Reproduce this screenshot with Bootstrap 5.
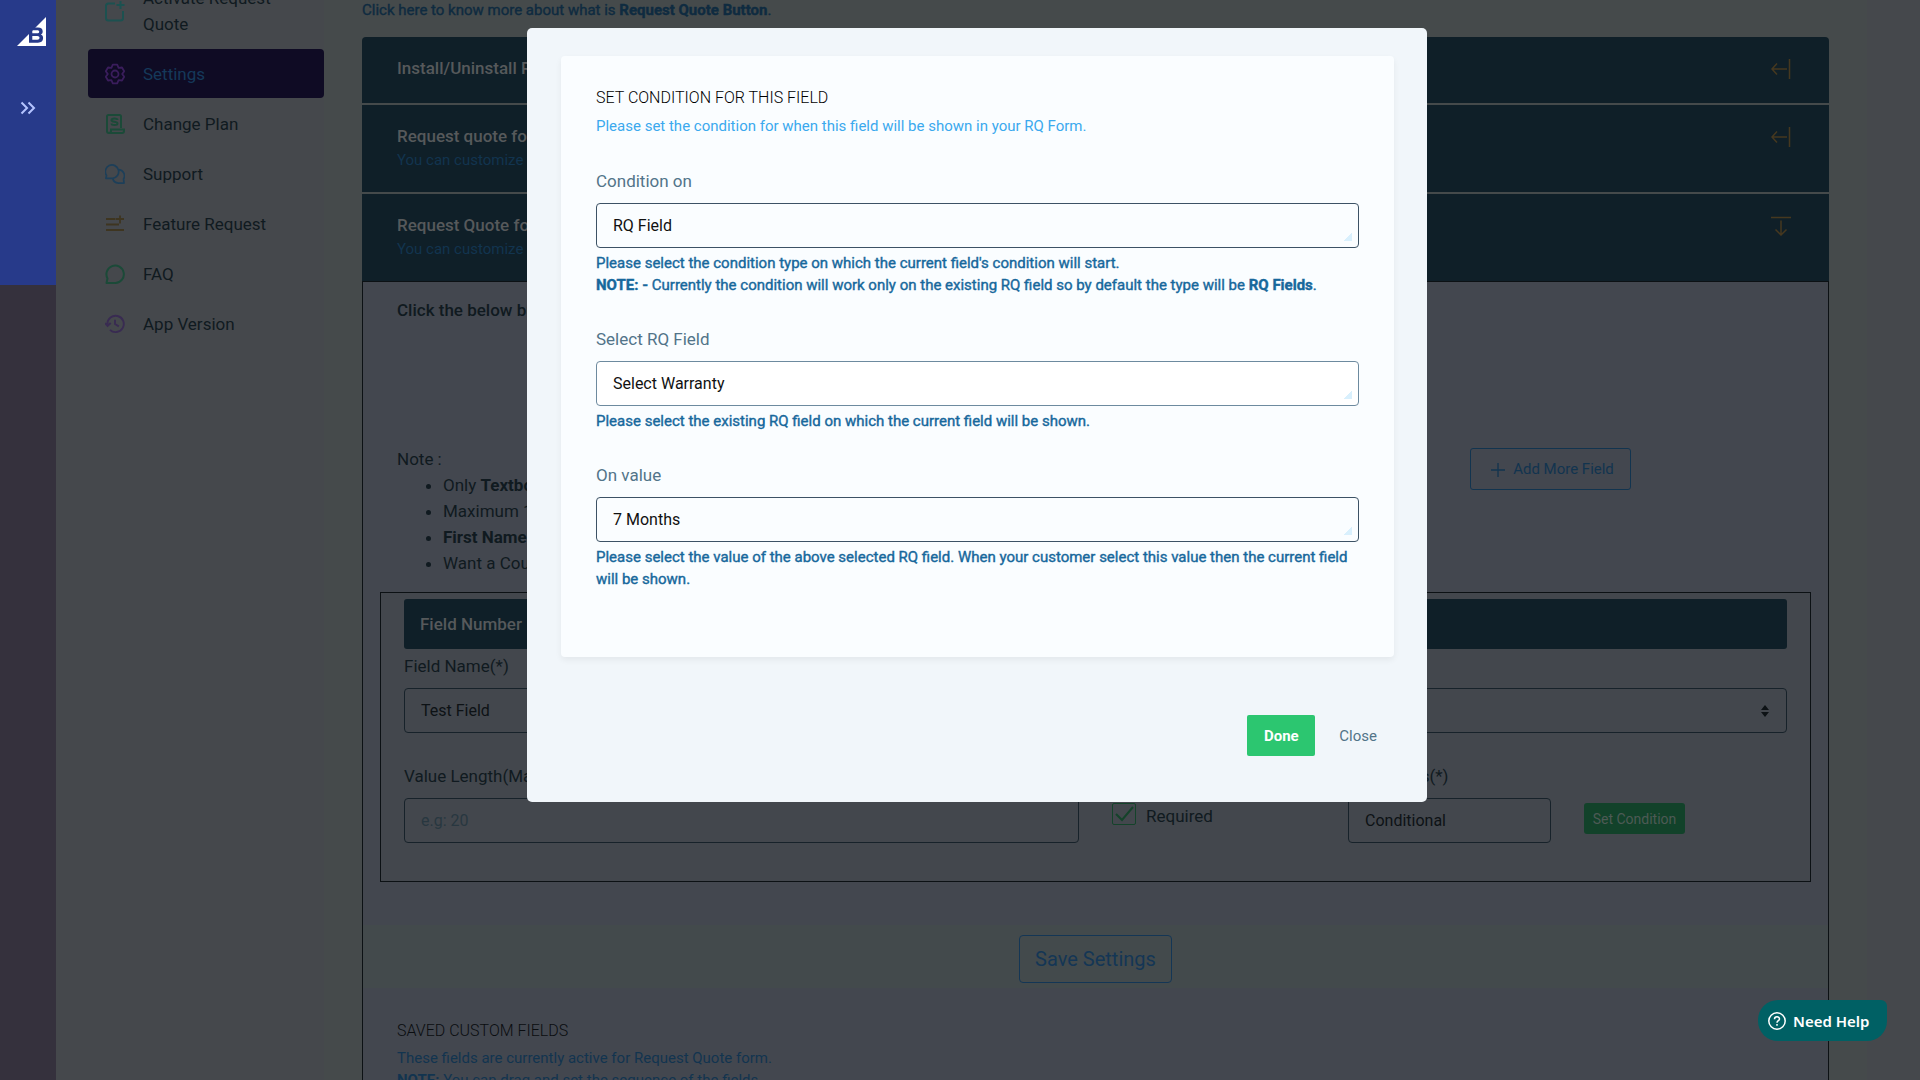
<!DOCTYPE html>
<html lang="en">
<head>
<meta charset="utf-8">
<meta name="viewport" content="width=device-width, initial-scale=1">
<title>Request Quote Settings</title>
<link rel="stylesheet" href="https://cdn.jsdelivr.net/npm/bootstrap@5.3.0/dist/css/bootstrap.min.css">
<style>
  :root { --navy: #0f1f28; --ink: #101a20; --line: #17222a; --sky: #12344f; }
  body { font-family: Roboto, "Liberation Sans", sans-serif; font-size: 17px; line-height: 26px; color: var(--ink); background: #45484c; height: 100vh; overflow: hidden; }
  .page-shell { min-height: 100vh; padding-right: 53px; }
  .rail { width: 56px; background: #35313d; }
  .rail-top { height: 285px; background: #273a8a; padding-top: 17px; }
  .rail-top .logo { display: block; margin-left: 17px; }
  .rail-top button { display: block; margin-top: 47px; width: 56px; padding: 0; border: 0; background: none; }
  .side { width: 268px; padding-left: 32px; margin-top: -25px; }
  .side a { display: flex; align-items: center; gap: 18px; padding: 12px 16px 11px 17px; border-radius: 4px; color: var(--ink); text-decoration: none; min-height: 49px; margin-bottom: 1px; }
  .side a svg { flex: none; }
  .side a.current { background: #0f0b24; color: #15395a; }
  .side .tall { padding-top: 10px; min-height: 73px; }
  .content-area { background: #454a4b; padding: 0 38px; min-width: 0; height: 100vh; overflow: hidden; }
  .hint { font-size: 15px; line-height: 22px; -webkit-text-stroke: 0.4px currentColor; color: #0f2b40; }
  .intro { line-height: 20px; margin-bottom: 17px; }
  .fold { background: var(--navy); color: #56595b; font-weight: 500; padding: 18px 38px 20px 35px; margin-bottom: 2px; min-height: 66px; display: flex; justify-content: space-between; align-items: flex-start; }
  .fold.two { min-height: 87px; }
  .fold:first-of-type { border-radius: 4px 4px 0 0; }
  .fold .sub { font-size: 15px; line-height: 22px; font-weight: 400; color: var(--sky); }
  .fold button { border: 0; padding: 4px 0 0; background: none; line-height: 0; }
  .fold-body { border: 1px solid #0c1114; background: #43474f; min-height: 900px; margin-top: -2px; padding-top: 15px; }
  .indent { padding: 0 34px; }
  .lead-line { font-weight: 500; }
  .note-row { margin-top: 123px; height: 146px; }
  .note-row ul { padding-left: 46px; margin: 0; }
  .add-btn { margin: 2px 163px 0 0; width: 161px; height: 42px; border: 1px solid var(--sky); color: var(--sky); background: none; border-radius: 3px; font-size: 15px; padding: 0 0 0 4px; }
  .field-panel { border: 1px solid #0c1114; margin: 0 17px 0 17px; padding: 6px 23px 38px; background: #43474d; }
  .field-panel .row { --bs-gutter-x: 33px; }
  .second-row { margin-top: 30px; }
  .req-label { margin-left: 10px; }
  .field-title { background: var(--navy); color: #56595b; font-weight: 500; border-radius: 3px; padding: 12px 16px; height: 50px; margin-bottom: 4px; }
  .field-panel label.cap { display: block; margin-bottom: 9px; }
  .box { display: block; width: 100%; height: 45px; padding: 0 16px; border: 1px solid var(--line); border-radius: 4px; background: none; color: #0d1215; font-size: 16px; appearance: none; outline: 0; }
  .box::placeholder { color: #283740; opacity: 1; }
  .updown { background: url("data:image/svg+xml,%3Csvg xmlns='http://www.w3.org/2000/svg' viewBox='0 0 8 12'%3E%3Cpath fill='%230d1215' d='M4 0 0 5h8zM4 12 0 7h8z'/%3E%3C/svg%3E") no-repeat right 17px center / 8px 12px; }
  .tick { appearance: none; width: 24px; height: 22px; margin: 0; border: 1px solid #14432a; border-radius: 2px; background: url("data:image/svg+xml,%3Csvg xmlns='http://www.w3.org/2000/svg' viewBox='0 0 22 20'%3E%3Cpath fill='none' stroke='%2314432a' stroke-width='2' d='M3 10l6 6L20 3'/%3E%3C/svg%3E") center / 22px 20px no-repeat; }
  .set-btn { height: 31px; width: 101px; padding: 0; border: 0; border-radius: 3px; background: #12422a; color: #4d5a55; font-size: 14px; }
  .save-band { background: #434a4c; margin-top: 43px; padding: 10px 0 5px; text-align: center; }
  .save-btn { width: 153px; height: 48px; border: 1px solid #143655; border-radius: 4px; background: none; color: #143655; font-size: 20px; }
  .saved { padding-top: 30px; }
  .saved h2, .cond-card h2 { font-size: 16px; line-height: 26px; font-weight: 300; margin: 0; color: #0a0d10; }
  .saved p { font-size: 15px; line-height: 22px; margin: 3px 0 0; color: #12344f; }
  .cond-modal { padding-left: 34px; overflow: hidden; }
  .cond-modal .modal-dialog { max-width: 900px; margin-top: 28px; }
  .cond-modal .modal-content { border: 0; border-radius: 5px; background: #f1f6fa; padding: 28px 33px 46px 34px; }
  .cond-card { background: #fafdff; border-radius: 4px; box-shadow: 0 3px 6px rgba(0,0,0,.06); padding: 29px 35px 67px; }
  .cond-card h2 { color: #000; }
  .cond-card .about { font-size: 15px; line-height: 22px; color: #3ba9ee; margin: 4px 0 31px; }
  .cond-card label { color: #527489; display: block; margin-bottom: 9px; }
  .cond-card .box { border-color: #3c5265; color: #111; background: linear-gradient(135deg, transparent 50%, #d9f0fd 50%) no-repeat right 6px bottom 6px / 8px 8px; }
  .cond-card .box.light { border-color: #6d8a9f; background-color: #fff; }
  .cond-card .hint { color: #17689c; margin: 4px 0 30px; }
  .cond-foot { margin-top: 58px; padding-right: 1px; }
  .cond-foot button { border: 0; height: 41px; font-size: 15px; padding: 0 16px; border-radius: 2px; }
  .cond-foot .done-btn { background: #2cc670; color: #fff; font-weight: 700; width: 68px; }
  .cond-foot .close-btn { background: none; color: #527489; margin-left: 8px; }
  .help-btn { position: fixed; right: 33px; bottom: 39px; z-index: 1060; height: 41px; width: 129px; border: 0; border-radius: 20px 6px 20px 20px; background: #006064; color: #fff; font: 600 15px/20px "Noto Sans", "Open Sans", sans-serif; padding: 0 0 0 10px; display: flex; align-items: center; gap: 7px; }
</style>
<script src="https://cdn.jsdelivr.net/npm/bootstrap@5.3.0/dist/js/bootstrap.bundle.min.js"></script>
</head>
<body>
<div class="page-shell d-flex">
  <div class="rail flex-shrink-0">
    <div class="rail-top">
      <svg class="logo" width="29" height="29" viewBox="0 0 29 29" role="img" aria-label="Logo"><path fill="#fff" d="M29 0v29H0L29 0z"/><path fill="#273a8a" fill-rule="evenodd" d="M12 15.500L17 10.500h4c3.200 0 4.700 1.500 4.700 3.900 0 1.500-.7 2.500-1.900 3.100 1.500.6 2.300 1.800 2.300 3.600 0 3-1.700 4.600-5.200 4.600H12zM15.300 13.200v3h4.900c1.200 0 2-.5 2-1.500s-.8-1.500-2-1.500zM15.300 19v3.700h5c1.400 0 2.200-.7 2.200-1.900 0-1.100-.8-1.800-2.200-1.800z"/></svg>
      <button type="button" aria-label="Expand"><svg width="48" height="24" viewBox="0 0 48 24" fill="none" stroke="#b5c4ff" stroke-width="2"><path d="M17.500 6.500l5.500 5.500-5.500 5.500M24.500 6.500l5.500 5.500-5.500 5.500"/></svg></button>
    </div>
  </div>
  <nav class="side flex-shrink-0">
    <a href="#" class="tall"><svg width="20" height="22" viewBox="0 0 20 22" fill="none" stroke="#1c5150" stroke-width="2"><path d="M10 3.500H3.500A2.500 2.500 0 0 0 1 6v12a2.500 2.500 0 0 0 2.500 2.500h12A2.500 2.500 0 0 0 18 18v-7M15.500 1v8M11.500 5h8"/></svg><span>Activate Request Quote</span></a>
    <a href="#" class="current"><svg width="20" height="22" viewBox="0 0 20 22" fill="none" stroke="#3a1d5c" stroke-width="1.800" stroke-linejoin="round"><path d="M7.800 1.600h4.400l1.400 3.200 3.400-.3 2.200 3.700-2 2.800 2 2.800-2.200 3.700-3.400-.3-1.400 3.200H7.800l-1.400-3.200-3.400.3L.8 13.800l2-2.800-2-2.800L3 4.500l3.400.3z"/><circle cx="10" cy="11" r="3.500"/></svg>Settings</a>
    <a href="#"><svg width="20" height="22" viewBox="0 0 20 22" fill="none" stroke="#1b4a38" stroke-width="2"><path d="M16 15V3.500A1.500 1.500 0 0 0 14.500 2h-11A1.500 1.500 0 0 0 2 3.500V18a2 2 0 0 0 2 2h13a2 2 0 0 0 2-2v-1.500H6V18a2 2 0 0 1-2 2M12.500 7c0-2-6-2-6 .3 0 2.200 6 .8 6 3.200 0 2-6 2-6 0"/></svg>Change Plan</a>
    <a href="#"><svg width="20" height="22" viewBox="0 0 21 22" fill="none" stroke="#1d3f59" stroke-width="1.800" stroke-linejoin="round"><path d="M1 15.500l.6-3A7 7 0 1 1 8 15.500zM14.800 6.500a6.500 6.500 0 0 1 4.700 9.800l.5 4.200h-6a6.500 6.500 0 0 1-6-5"/></svg>Support</a>
    <a href="#"><svg width="20" height="22" viewBox="0 0 20 22" fill="none" stroke="#3e3520" stroke-width="1.800"><path d="M1 6h9.500M1 11.500h13M1 17h18M15 2.500v8M11 6h8"/></svg>Feature Request</a>
    <a href="#"><svg width="20" height="22" viewBox="0 0 20 22" fill="none" stroke="#1b4a38" stroke-width="2" stroke-linejoin="round"><path d="M1.500 20l1-4.500A8.700 8.700 0 1 1 10.500 20z"/></svg>FAQ</a>
    <a href="#"><svg width="20" height="22" viewBox="0 0 21 22" fill="none" stroke="#392b52" stroke-width="2"><path d="M2.500 11a8.600 8.600 0 1 1 2.700 6.200M0 10l2.700 3L6 10M10.500 6.500V11l4 2.500"/></svg>App Version</a>
  </nav>
  <main class="content-area flex-grow-1">
    <div class="hint intro">Click here to know more about what is <b>Request Quote Button</b>.</div>
    <section class="fold"><div>Install/Uninstall Request Quote</div><button type="button" aria-label="Open"><svg width="20" height="20" viewBox="0 0 20 20" fill="none" stroke="#46381f" stroke-width="1.500"><path d="M18.500 0v20M16 10H1M6 4.500L1 10l5 5.500"/></svg></button></section>
    <section class="fold two"><div>Request quote form<div class="sub">You can customize your form</div></div><button type="button" aria-label="Open"><svg width="20" height="20" viewBox="0 0 20 20" fill="none" stroke="#46381f" stroke-width="1.500"><path d="M18.500 0v20M16 10H1M6 4.500L1 10l5 5.500"/></svg></button></section>
    <section class="fold two"><div>Request Quote form<div class="sub">You can customize your form</div></div><button type="button" aria-label="Close section"><svg width="20" height="20" viewBox="0 0 20 20" fill="none" stroke="#46381f" stroke-width="1.500"><path d="M0 1.500h20M10 4.500v14M4.500 13.500l5.500 5.500 5.500-5.500"/></svg></button></section>
    <div class="fold-body">
      <div class="indent lead-line">Click the below button</div>
      <div class="indent note-row d-flex justify-content-between align-items-start">
        <div>Note :
          <ul><li>Only <b>Textbox</b></li><li>Maximum 10</li><li><b>First Name</b></li><li>Want a Country</li></ul>
        </div>
        <button type="button" class="add-btn"><svg width="14" height="14" viewBox="0 0 14 14" stroke="currentColor" stroke-width="1.300" class="me-2"><path d="M7 0v14M0 7h14"/></svg>Add More Field</button>
      </div>
      <form class="field-panel">
        <div class="field-title">Field Number 1</div>
        <div class="row">
          <div class="col-6"><label class="cap" for="fname">Field Name(*)</label><input class="box" id="fname" value="Test Field"></div>
          <div class="col-6"><label class="cap" for="ftype">Field Type(*)</label><select class="box updown" id="ftype"><option>Textbox</option></select></div>
        </div>
        <div class="row second-row">
          <div class="col-6"><label class="cap" for="flen">Value Length(Max)</label><input class="box" id="flen" placeholder="e.g: 20"></div>
          <div class="col-6"><div class="row">
            <div class="col-4 d-flex pt-4 mt-3"><input class="tick" type="checkbox" id="req" checked><label for="req" class="req-label">Required</label></div>
            <div class="col-4"><label class="cap" for="cond">Conditions(*)</label><select class="box" id="cond"><option>Conditional</option></select></div>
            <div class="col-4 pt-4 mt-3"><button type="button" class="set-btn">Set Condition</button></div>
          </div></div>
        </div>
      </form>
      <div class="save-band"><button type="button" class="save-btn">Save Settings</button></div>
      <div class="indent saved"><h2>SAVED CUSTOM FIELDS</h2><p>These fields are currently active for Request Quote form.<br><b>NOTE:</b> You can drag and set the sequence of the fields.</p></div>
    </div>
  </main>
</div>

<div class="modal show d-block cond-modal" tabindex="-1" role="dialog" aria-labelledby="condTitle">
  <div class="modal-dialog">
    <div class="modal-content">
      <div class="cond-card">
        <h2 id="condTitle">SET CONDITION FOR THIS FIELD</h2>
        <p class="about">Please set the condition for when this field will be shown in your RQ Form.</p>
        <label for="c1">Condition on</label>
        <select class="box" id="c1"><option>RQ Field</option></select>
        <p class="hint">Please select the condition type on which the current field's condition will start.<br><b>NOTE: -</b> Currently the condition will work only on the existing RQ field so by default the type will be <b>RQ Fields</b>.</p>
        <label for="c2">Select RQ Field</label>
        <select class="box light" id="c2"><option>Select Warranty</option></select>
        <p class="hint">Please select the existing RQ field on which the current field will be shown.</p>
        <label for="c3">On value</label>
        <select class="box" id="c3"><option>7 Months</option></select>
        <p class="hint mb-0">Please select the value of the above selected RQ field. When your customer select this value then the current field will be shown.</p>
      </div>
      <div class="cond-foot d-flex justify-content-end">
        <button type="button" class="done-btn">Done</button>
        <button type="button" class="close-btn">Close</button>
      </div>
    </div>
  </div>
</div>
<button type="button" class="help-btn"><svg width="18" height="18" viewBox="0 0 18 18" fill="none" stroke="#fff" stroke-width="1.500"><circle cx="9" cy="9" r="8.200"/><path d="M6.500 7.200c0-3.200 5-3.100 5-.3 0 1.900-2.500 1.700-2.500 3.800M9 12v1.700"/></svg>Need Help</button>
</body>
</html>
